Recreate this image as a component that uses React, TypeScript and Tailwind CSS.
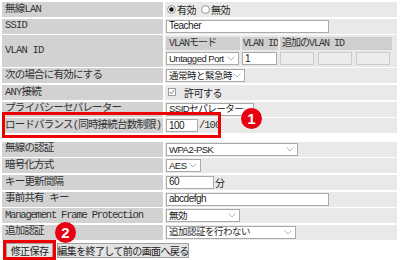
import React from 'react';

const labelFont = "font-['Liberation_Mono','Noto_Sans_CJK_JP',monospace] text-[10.5px] tracking-[-0.8px] text-[#333] whitespace-nowrap";
const valueFont = "font-['Liberation_Sans','Noto_Sans_CJK_JP',sans-serif] text-[10px] tracking-[-0.5px] text-[#222] whitespace-nowrap";

const Chevron: React.FC = () => (
  <svg width="8" height="5" viewBox="0 0 8 5" className="shrink-0">
    <polyline points="0.5,0.5 4,4 7.5,0.5" fill="none" stroke="#b5b5b5" strokeWidth="1" />
  </svg>
);

const Select: React.FC<{ text: string; w: string }> = ({ text, w }) => (
  <div className={`${w} h-[13px] shrink-0 bg-white border border-[#a9a9a9] flex items-center justify-between pl-[2px] pr-[3px] leading-none overflow-hidden text-[9.5px] tracking-[-0.5px]`}>
    <span className="whitespace-nowrap">{text}</span>
    <Chevron />
  </div>
);

const Input: React.FC<{ text?: string; w: string; disabled?: boolean }> = ({ text, w, disabled }) => (
  <div
    className={`${w} h-[13px] shrink-0 border flex items-center pl-[2px] leading-none overflow-hidden ${
      disabled ? 'bg-[#ececec] border-[#cbcbcb]' : 'bg-white border-[#a9a9a9]'
    }`}
  >
    {text}
  </div>
);

const Row: React.FC<{ label: React.ReactNode; children?: React.ReactNode; h?: string }> = ({ label, children, h = 'h-[15px]' }) => (
  <>
    <div className={`${h} bg-[#d2d2d2] flex items-center pl-[3px] overflow-hidden ${labelFont}`}>{label}</div>
    <div className={`${h} bg-[#e9e9e9] flex items-center pl-[1px] overflow-hidden ${valueFont}`}>{children}</div>
  </>
);

const Radio: React.FC<{ checked?: boolean }> = ({ checked }) => (
  <svg width="9" height="9" viewBox="0 0 9 9" className="shrink-0">
    <circle cx="4.5" cy="4.5" r="3.9" fill="white" stroke="#7a7a7a" strokeWidth="0.8" />
    {checked && <circle cx="4.5" cy="4.5" r="2.2" fill="#111" />}
  </svg>
);

const Badge: React.FC<{ n: string; className: string }> = ({ n, className }) => (
  <div
    className={`absolute w-[21px] h-[21px] rounded-full bg-[#e60012] text-white flex items-center justify-center font-['Liberation_Sans',sans-serif] font-bold text-[15px] leading-none ${className}`}
  >
    {n}
  </div>
);

const App: React.FC = () => {
  return (
    <div className="relative w-[400px] h-[260px] bg-white overflow-hidden">
      <div className="pl-[2px] pt-[2px]">
        {/* 基本設定 */}
        <div className="grid grid-cols-[161px_232px] gap-x-[2px] gap-y-[1.6px]">
          <Row label="無線LAN">
            <div className="flex items-center pl-[1px] font-['Noto_Sans_CJK_JP',sans-serif]">
              <Radio checked />
              <span className="ml-[1px]">有効</span>
              <span className="ml-[5px] flex"><Radio /></span>
              <span className="ml-[1px]">無効</span>
            </div>
          </Row>
          <Row label="SSID">
            <Input text="Teacher" w="w-[163px]" />
          </Row>
          <Row label="VLAN ID" h="h-[31.6px]">
            <div className="flex flex-col gap-[2px] pt-[1px]">
              <div className={`grid grid-cols-[74px_36px_112px] gap-x-[2px] h-[13px] ${labelFont} text-[10px] tracking-[-1px]`}>
                <div className="bg-[#cfcfcf] flex items-center pl-[3px] overflow-hidden">VLANモード</div>
                <div className="bg-[#cfcfcf] flex items-center pl-[1px] overflow-hidden">VLAN ID</div>
                <div className="bg-[#cfcfcf] flex items-center pl-[2px] overflow-hidden">追加のVLAN ID</div>
              </div>
              <div className="grid grid-cols-[74px_36px_112px] gap-x-[2px] h-[13px]">
                <Select text="Untagged Port" w="w-[73px]" />
                <Input text="1" w="w-[35px]" />
                <div className="flex gap-[4px]">
                  <Input w="w-[34px]" disabled />
                  <Input w="w-[34px]" disabled />
                  <Input w="w-[34px]" disabled />
                </div>
              </div>
            </div>
          </Row>
          <Row label="次の場合に有効にする">
            <Select text="通常時と緊急時" w="w-[79px]" />
          </Row>
          <Row label="ANY接続">
            <div className="flex items-center pl-[2px]">
              <svg width="8" height="8" viewBox="0 0 8 8">
                <rect x="0.5" y="0.5" width="7" height="7" fill="white" stroke="#8a8a8a" strokeWidth="0.8" />
                <polyline points="1.6,4 3.3,5.8 6.4,1.8" fill="none" stroke="#777" strokeWidth="0.9" />
              </svg>
              <span className="ml-[8px] font-['Noto_Sans_CJK_JP',sans-serif]">許可する</span>
            </div>
          </Row>
          <Row label="プライバシーセパレーター">
            <Select text="SSIDセパレーター" w="w-[88px]" />
          </Row>
          <Row label="ロードバランス(同時接続台数制限)">
            <Input text="100" w="w-[32px]" />
            <span className={`ml-[1px] ${labelFont} text-[8.5px] tracking-[-1px]`}>/100</span>
          </Row>
        </div>

        {/* セキュリティ設定 */}
        <div className="grid grid-cols-[161px_232px] gap-x-[2px] gap-y-[1.6px] mt-[8.6px]">
          <Row label="無線の認証">
            <Select text="WPA2-PSK" w="w-[132px]" />
          </Row>
          <Row label="暗号化方式">
            <Select text="AES" w="w-[35px]" />
          </Row>
          <Row label="キー更新間隔">
            <Input text="60" w="w-[48px]" />
            <span className="ml-[1px] font-['Noto_Sans_CJK_JP',sans-serif]">分</span>
          </Row>
          <Row label="事前共有 キー">
            <Input text="abcdefgh" w="w-[163px]" />
          </Row>
          <Row label={<span className="tracking-[-1.2px]">Management Frame Protection</span>}>
            <Select text="無効" w="w-[74px]" />
          </Row>
          <Row label="追加認証">
            <Select text="追加認証を行わない" w="w-[130px]" />
          </Row>
        </div>

        <div className="flex gap-[4px] mt-[3.5px] pl-[4px] font-['Noto_Sans_CJK_JP',sans-serif] text-[10px] tracking-[-0.6px] text-[#222]">
          <button className="w-[47px] h-[15px] bg-[#e3e3e3] border border-[#a0a0a0] leading-none flex items-center justify-center whitespace-nowrap">
            修正保存
          </button>
          <button className="w-[132px] h-[15px] bg-[#e3e3e3] border border-[#a0a0a0] leading-none flex items-center justify-center whitespace-nowrap">
            編集を終了して前の画面へ戻る
          </button>
        </div>
      </div>

      {/* 注釈 */}
      <div className="absolute left-[2px] top-[112px] w-[219px] h-[26px] border-[3px] border-[#ee0000]" />
      <div className="absolute left-[3px] top-[240px] w-[53px] h-[20px] border-[3px] border-[#ee0000]" />
      <Badge n="1" className="left-[241px] top-[108px]" />
      <Badge n="2" className="left-[55px] top-[222px]" />
    </div>
  );
};

export default App;
